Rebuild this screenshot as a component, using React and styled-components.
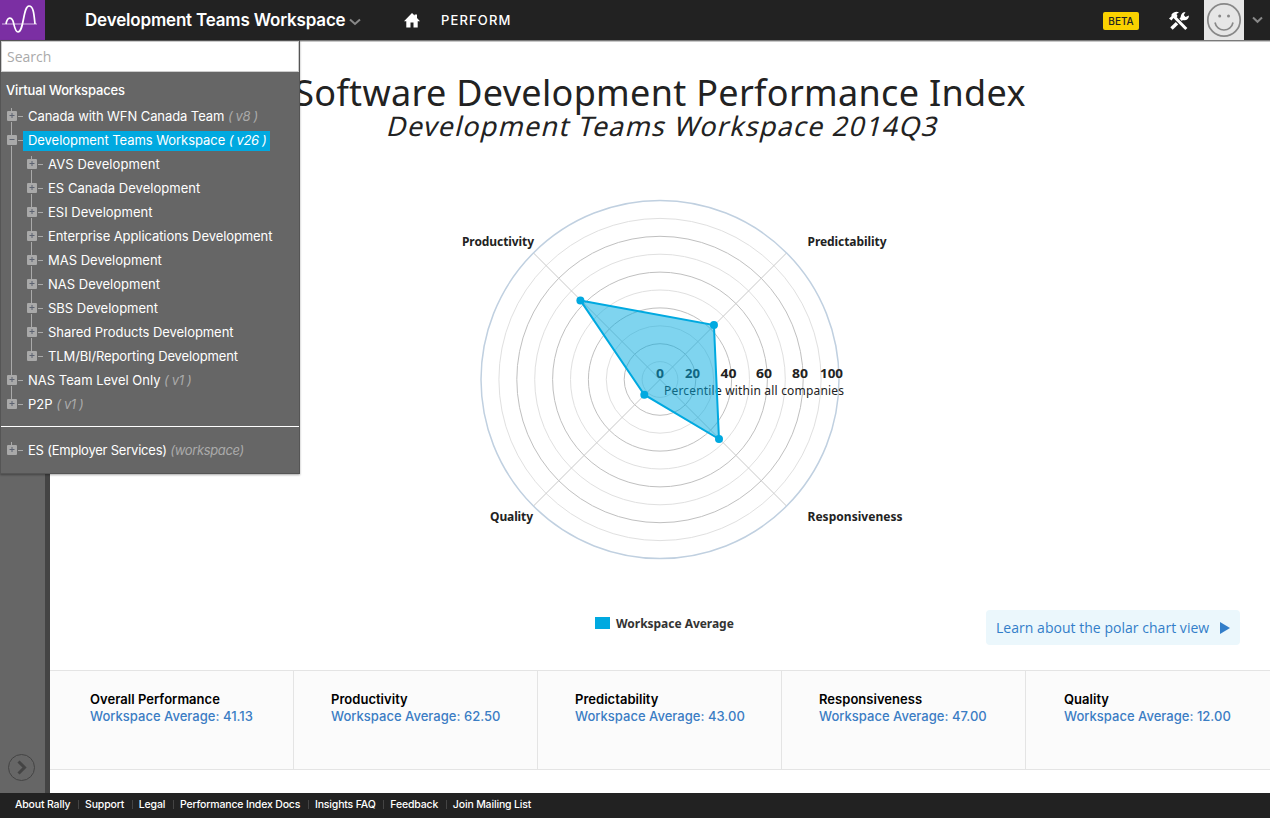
import React from "react";
import styled, { createGlobalStyle } from "styled-components";

const ui = `Inter, "Liberation Sans", sans-serif`;
const chartFont = `"Noto Sans", "Open Sans", sans-serif`;

const Global = createGlobalStyle`
  * { box-sizing: border-box; }
  body { margin: 0; background: #fff; font-family: ${ui}; }
  h1, h2, h3, p, ul { margin: 0; padding: 0; font-weight: 400; }
  svg { display: block; }
`;

const Page = styled.div`
  position: relative;
  display: flex;
  flex-direction: column;
  width: 1270px;
  height: 818px;
  overflow: hidden;
`;

const Header = styled.header`
  display: flex;
  align-items: center;
  height: 41px;
  flex: none;
  background: #222;
  border-bottom: 1px solid #7a7a7a;
  box-shadow: 0 1px 0 #c8c8c8;
  color: #fff;
`;
const Logo = styled.div`
  width: 45px;
  height: 40px;
  background: #7b2fa3;
`;
const WorkspaceTitle = styled.div`
  margin-left: 40px;
  width: 261px;
  font-size: 17px;
  font-weight: 600;
  letter-spacing: -0.18px;
  white-space: nowrap;
`;
const Caret = styled.svg`
  margin: ${(p) => p.$m};
`;
const HomeIcon = styled.svg`
  margin-left: 43px;
`;
const NavItem = styled.span`
  margin-left: 21px;
  font-size: 13px;
  letter-spacing: 1.15px;
  font-weight: 500;
  line-height: 16px;
  margin-bottom: 1px;
`;
const Beta = styled.span`
  margin-left: auto;
  margin-top: 1px;
  width: 36px;
  height: 18px;
  border-radius: 2px;
  background: #fad200;
  color: #222;
  font-size: 10px;
  font-weight: 500;
  line-height: 18px;
  text-align: center;
`;
const Tools = styled.svg`
  margin-left: 29px;
  margin-top: 2px;
`;
const Avatar = styled.div`
  width: 40px;
  height: 40px;
  margin-left: 14px;
  background: #e6e6e6;
`;

const Body = styled.div`
  display: flex;
  flex: 1;
  min-height: 0;
`;
const Rail = styled.aside`
  display: flex;
  align-items: flex-end;
  width: 50px;
  padding: 0 0 11px 7px;
  background: #666;
  border-right: 5px solid #444;
`;
const Main = styled.main`
  display: flex;
  flex-direction: column;
  width: 1220px;
`;
const ChartArea = styled.section`
  display: flex;
  flex-direction: column;
  align-items: center;
  height: 629px;
  padding-top: 28px;
  font-family: ${chartFont};
  color: #222;
`;
const Title = styled.h1`
  font-size: 36px;
  line-height: 48px;
  letter-spacing: 0.31px;
  white-space: nowrap;
`;
const Subtitle = styled.h2`
  margin: -9px 0 0 8px;
  font-size: 27px;
  line-height: 36px;
  letter-spacing: 1.2px;
  transform: skewX(-14deg);
  white-space: nowrap;
`;
const Polar = styled.svg`
  margin-top: 45px;
`;
const ChartFooter = styled.div`
  display: flex;
  align-self: stretch;
  justify-content: space-between;
  padding: 0 30px 0 545px;
  margin-top: 19px;
`;
const Legend = styled.div`
  display: flex;
  align-items: center;
  gap: 6px;
  height: 26px;
  font-size: 12px;
  font-weight: 700;
  white-space: nowrap;
  letter-spacing: -0.03px;
  color: #333;
`;
const Swatch = styled.i`
  width: 15px;
  height: 12px;
  background: #00a9e0;
`;
const Learn = styled.a`
  display: flex;
  align-items: center;
  justify-content: space-between;
  width: 254px;
  height: 35px;
  padding: 0 10px;
  border-radius: 4px;
  background: #ebf7fc;
  color: #337ec9;
  font-family: "Open Sans", sans-serif;
  font-size: 14px;
  letter-spacing: 0.03px;
  white-space: nowrap;
`;

const Stats = styled.section`
  display: flex;
  height: 100px;
  background: #fbfbfb;
  border: solid #e4e4e4;
  border-width: 1px 0;
`;
const Stat = styled.div`
  width: 244px;
  padding: 20px 0 0 ${(p) => p.$pad}px;
  border-right: ${(p) => (p.$last ? "0" : "1px solid #e4e4e4")};
  font-size: 13px;
  line-height: 17px;
  font-weight: 600;
  white-space: nowrap;
`;
const StatName = styled.h3`
  font-size: 13px;
  font-weight: 600;
  letter-spacing: 0.03px;
  color: #000;
`;
const StatValue = styled.p`
  font-weight: 500;
  letter-spacing: 0.02px;
  color: #3b7dc4;
`;

const Footer = styled.footer`
  display: flex;
  align-items: center;
  height: 25px;
  flex: none;
  padding: 0 0 2px 15px;
  background: #222;
`;
const FootLink = styled.a`
  padding-right: 8.500px;
  margin-right: 6.200px;
  color: #fff;
  font-size: 10.5px;
  font-weight: 500;
  line-height: 13px;
  letter-spacing: -0.16px;
  white-space: nowrap;
  background: linear-gradient(#444, #444) right center / 1px 9px no-repeat;
  &:last-child { background: none; }
`;

const Menu = styled.nav`
  position: absolute;
  top: 40px;
  left: 0;
  width: 300px;
  height: 434px;
  background: #666;
  border: 1px solid #555;
  box-shadow: 0 1px 2px rgba(0, 0, 0, 0.35);
  font-size: 13px;
  color: #fff;
  white-space: nowrap;
`;
const Search = styled.input`
  display: block;
  width: 298px;
  height: 31px;
  padding: 1px 5px;
  border: 1px solid #ccc;
  background: #fff;
  font: 14px "Open Sans", sans-serif;
  &::placeholder { color: #aaa; opacity: 1; }
`;
const MenuHeading = styled.div`
  padding: 10px 0 0 5px;
  height: 32px;
  font-weight: 500;
  letter-spacing: -0.15px;
  line-height: 16px;
`;
const TreeRow = styled.div`
  display: flex;
  align-items: center;
  height: 24px;
  padding-left: 5px;
`;
const RowLabel = styled.span`
  height: 20px;
  line-height: 19px;
  padding: 0 4px 0 5px;
  margin-top: 1px;
  background: ${(p) => (p.$active ? "#00a9e0" : "transparent")};
  letter-spacing: ${(p) => p.$ls || 0}px;
  em {
    color: ${(p) => (p.$active ? "#fff" : "#aaa")};
    letter-spacing: -0.35px;
  }
`;
const Divider = styled.div`
  height: 1px;
  margin: 10px 0 11px;
  background: #fff;
`;

/* Expander box with the connecting lines of the tree */
function Expander({ child, open, top = true, bottom = true }) {
  const x = child ? 20 : 0;
  return (
    <svg width={x + 17} height="24">
      {child && <path d="M5.500 0V24" stroke="#aaa" />}
      <path d={`M${x + 5.5} ${top ? 0 : 4}V7`} stroke="#aaa" />
      {bottom && <path d={`M${x + 5.5} 18V24`} stroke="#aaa" />}
      <rect x={x + 1} y="7" width="10" height="10" rx="1" fill="#a9a9a9" />
      <path d={`M${x + 12} 12.500h5`} stroke="#aaa" />
      <path d={`M${x + 3.5} 11.500h5${open ? "" : `M${x + 6} 9v5`}`} stroke="#5c6270" />
    </svg>
  );
}

const tree = [
  { t: "Canada with WFN Canada Team", v: "( v8 )", top: false, ls: -0.08 },
  { t: "Development Teams Workspace", v: "( v26 )", active: true, ls: -0.05 },
  { t: "AVS Development", child: true, top: false, ls: 0.12 },
  { t: "ES Canada Development", child: true, ls: 0.03 },
  { t: "ESI Development", child: true },
  { t: "Enterprise Applications Development", child: true, ls: -0.08 },
  { t: "MAS Development", child: true },
  { t: "NAS Development", child: true },
  { t: "SBS Development", child: true },
  { t: "Shared Products Development", child: true, ls: -0.05 },
  { t: "TLM/BI/Reporting Development", child: true, bottom: false, ls: -0.12 },
  { t: "NAS Team Level Only", v: "( v1 )" },
  { t: "P2P", v: "( v1 )", bottom: false },
];

function Row({ item }) {
  return (
    <TreeRow>
      <Expander child={item.child} open={item.active} top={item.top} bottom={item.bottom} />
      <RowLabel $active={item.active} $ls={item.ls}>
        {item.t} {item.v && <em>{item.v}</em>}
      </RowLabel>
    </TreeRow>
  );
}

const stats = [
  ["Overall Performance", "41.13", 40],
  ["Productivity", "62.50", 37],
  ["Predictability", "43.00", 37],
  ["Responsiveness", "47.00", 37],
  ["Quality", "12.00", 38],
];
const links = ["About Rally", "Support", "Legal", "Performance Index Docs", "Insights FAQ", "Feedback", "Join Mailing List"];

const R = 179;
const k = Math.SQRT1_2;
const points = [
  [62.5, -1, -1],
  [43, 1, -1],
  [47, 1, 1],
  [12, -1, 1],
].map(([v, sx, sy]) => [(sx * v * R * k) / 100 - 0.5, (sy * v * R * k) / 100]);

function PolarChart() {
  const e = R * k;
  return (
    <Polar width="500" height="402" viewBox="-250 -190.5 500 402" fontFamily={chartFont} fill="#222">
      <g fill="none">
        {[1, 2, 3, 4, 5, 6, 7, 8, 9].map((n) => (
          <circle key={n} r={n * 17.9} stroke={n % 2 ? "#e0e0e0" : "#c0c0c0"} />
        ))}
        <path d={`M${-e} ${-e}L${e} ${e}M${e} ${-e}L${-e} ${e}`} stroke="#c8c8c8" />
        <circle r={R} stroke="#c0d0e0" strokeWidth="1.5" />
      </g>
      <g fontSize="12" fontWeight="700">
        <text x="-198" y="-134" textLength="72">Productivity</text>
        <text x="147.500" y="-134" textLength="79">Predictability</text>
        <text x="-170" y="141" textLength="43">Quality</text>
        <text x="147.500" y="141" textLength="95">Responsiveness</text>
      </g>
      <g fontSize="12.500" fontWeight="700">
        {[["0", -4, 8], ["20", 25, 15], ["40", 60.5, 16], ["60", 96, 16], ["80", 132, 16], ["100", 160, 23]].map(([t, x, w]) => (
          <text key={t} x={x} y="-2" textLength={w} lengthAdjust="spacingAndGlyphs">{t}</text>
        ))}
      </g>
      <text x="4" y="15" fontSize="12" textLength="180">Percentile within all companies</text>
      <polygon points={points.join(" ")} fill="#00a9e0" fillOpacity="0.5" stroke="#00a9e0" strokeWidth="2" />
      {points.map(([x, y]) => (
        <circle key={x} cx={x} cy={y} r="4" fill="#00a9e0" />
      ))}
    </Polar>
  );
}

export default function App() {
  return (
    <Page>
      <Global />
      <Header>
        <Logo>
          <svg width="45" height="40" fill="none">
            <path d="M2 24H37" stroke="#b98ad0" strokeWidth="1.500" />
            <path d="M6 24C7 17.500 11 16 13 21C14.500 26 15 32 18 32C24 32 23 6 29 6C33.500 6 34 14 35 24" stroke="#fff" strokeWidth="1.700" />
          </svg>
        </Logo>
        <WorkspaceTitle>Development Teams Workspace</WorkspaceTitle>
        <Caret $m="3px 0 0 3px" width="12" height="8" fill="none">
          <path d="M1 1.500L6 6L11 1.500" stroke="#888" strokeWidth="2" />
        </Caret>
        <HomeIcon width="16" height="15" fill="#fff">
          <path d="M8 0L10.600 2.600V1.500H13V5L16 8.200H13.700V14.500H9.500V9.500H6.500V14.500H2.300V8.200H0Z" />
        </HomeIcon>
        <NavItem>PERFORM</NavItem>
        <Beta>BETA</Beta>
        <Tools width="22" height="20" viewBox="0 0 22 20">
          <path d="M3.500 17.500L15 6.500" stroke="#fff" strokeWidth="3.400" />
          <path d="M13 8C12 4.500 14 1 17.500 1L15.800 4L17.500 6L21 4.500C21 8 18 10 14.800 9Z" fill="#fff" />
          <path d="M6.500 6L18.500 18.500" stroke="#222" strokeWidth="5" />
          <path d="M6.500 6L18.300 18" stroke="#fff" strokeWidth="3" />
          <path d="M1 7.500L3.500 9.500L5.500 7L8 7.300L9.500 5L8.500 3L11 1.200C8 0 5.500 1 3.500 3.500V5.200Z" fill="#fff" />
        </Tools>
        <Avatar>
          <svg width="40" height="40" fill="none" stroke="#888" strokeWidth="1.700">
            <circle cx="20" cy="20" r="16.200" />
            <path d="M11 22.500C13 32.500 27 32.500 29 22.500" />
            <circle cx="15.700" cy="16" r="1.500" fill="#888" stroke="none" />
            <circle cx="24.500" cy="16" r="1.500" fill="#888" stroke="none" />
          </svg>
        </Avatar>
        <Caret $m="0 7px 0 8px" width="11" height="8" fill="none">
          <path d="M1 1.500L5.500 5.800L10 1.500" stroke="#888" strokeWidth="2" />
        </Caret>
      </Header>
      <Body>
        <Rail>
          <svg width="29" height="29" fill="none" stroke="#444">
            <circle cx="14.500" cy="14.500" r="13" />
            <path d="M11.500 8.500L17.500 14.500L11.500 20.500" strokeWidth="3" />
          </svg>
        </Rail>
        <Main>
          <ChartArea>
            <Title>Software Development Performance Index</Title>
            <Subtitle>Development Teams Workspace 2014Q3</Subtitle>
            <PolarChart />
            <ChartFooter>
              <Legend><Swatch />Workspace Average</Legend>
              <Learn>
                Learn about the polar chart view
                <svg width="10" height="12"><path d="M0 0L10 6L0 12Z" fill="#337ec9" /></svg>
              </Learn>
            </ChartFooter>
          </ChartArea>
          <Stats>
            {stats.map(([name, value, pad], i) => (
              <Stat key={name} $pad={pad} $last={i === 4}>
                <StatName>{name}</StatName>
                <StatValue>Workspace Average: {value}</StatValue>
              </Stat>
            ))}
          </Stats>
        </Main>
      </Body>
      <Footer>
        {links.map((l) => <FootLink key={l}>{l}</FootLink>)}
      </Footer>
      <Menu>
        <Search placeholder="Search" />
        <MenuHeading>Virtual Workspaces</MenuHeading>
        {tree.map((item) => <Row key={item.t} item={item} />)}
        <Divider />
        <Row item={{ t: "ES (Employer Services)", v: "(workspace)", top: false, bottom: false, ls: -0.22 }} />
      </Menu>
    </Page>
  );
}
